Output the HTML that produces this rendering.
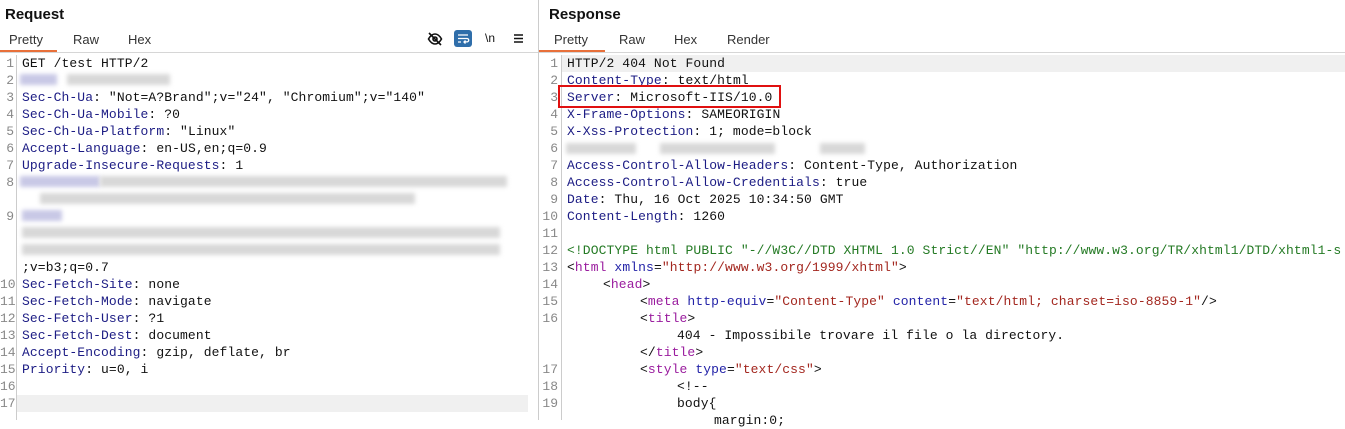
<!DOCTYPE html>
<html><head><meta charset="utf-8"><style>
*{margin:0;padding:0;box-sizing:border-box}
body{width:1345px;height:420px;background:#fff;position:relative;overflow:hidden;font-family:"Liberation Sans",sans-serif}
.title{position:absolute;top:6px;font-weight:bold;font-size:15px;color:#111}
.tab{position:absolute;top:32px;font-size:13px;color:#333}
.ul{position:absolute;top:50px;height:2px;background:#e8703a}
.hr{position:absolute;top:52px;height:1px;background:#d6d6d6}
.ln{position:absolute;font-family:"Liberation Mono",monospace;font-size:13px;color:#888;width:14px;text-align:right;line-height:17px}
.t{position:absolute;font-family:"Liberation Mono",monospace;font-size:13px;color:#111;line-height:17px;white-space:pre;letter-spacing:0.1px}
.h{color:#1c1c84}
.g{color:#247a24}.p{color:#9a1c9e}.a{color:#2323a8}.v{color:#a3271f}
.bl{position:absolute;background:#d8d8d8;filter:blur(2px);height:11px}
.bb{position:absolute;background:#c8c8e6;filter:blur(2px);height:11px}
.gut{position:absolute;top:55px;bottom:0;width:1px;background:#ccc}
.cur{position:absolute;height:17px;background:#f0f0f0}
.in{display:inline-block}
</style></head><body>
<div style="position:absolute;left:538px;top:0;width:1px;height:420px;background:#ccc"></div>
<div class="title" style="left:5px">Request</div>
<div class="title" style="left:549px">Response</div>
<div class="tab" style="left:9px">Pretty</div><div class="tab" style="left:73px">Raw</div><div class="tab" style="left:128px">Hex</div>
<div class="tab" style="left:554px">Pretty</div><div class="tab" style="left:619px">Raw</div><div class="tab" style="left:674px">Hex</div><div class="tab" style="left:727px">Render</div>
<div class="ul" style="left:0;width:57px"></div><div class="ul" style="left:539px;width:66px"></div>
<div class="hr" style="left:0;width:538px"></div><div class="hr" style="left:539px;width:806px"></div>
<svg style="position:absolute;left:427px;top:31px" width="16" height="16" viewBox="0 0 16 16" fill="none" stroke="#111" stroke-width="1.6"><path d="M1.5 8c2-3.5 4-5 6.5-5s4.5 1.5 6.5 5c-2 3.5-4 5-6.5 5S3.5 11.5 1.5 8z"/><circle cx="8" cy="8" r="2"/><path d="M2 2l12 12"/></svg>
<div style="position:absolute;left:454px;top:30px;width:18px;height:17px;background:#2f6eaa;border-radius:3px"></div>
<svg style="position:absolute;left:456px;top:32px" width="14" height="13" viewBox="0 0 14 13" fill="none" stroke="#fff" stroke-width="1.3"><path d="M2 3h10M2 6.5h9a1.7 1.7 0 010 3.4H8M9.5 8.5L8 10l1.5 1.5M2 10h3"/></svg>
<div style="position:absolute;left:485px;top:31px;font-size:12px;color:#111">\n</div>
<svg style="position:absolute;left:513px;top:33px" width="11" height="11" viewBox="0 0 11 11" stroke="#111" stroke-width="1.5"><path d="M1 2h9M1 5.5h9M1 9h9"/></svg>

<div class="gut" style="left:16px"></div>
<div class="gut" style="left:561px"></div>
<div class="cur" style="left:17px;top:395px;width:511px"></div>
<div class="cur" style="left:562px;top:55px;width:783px"></div>

<!-- request -->
<div class="ln" style="left:0;top:55px">1<br>2<br>3<br>4<br>5<br>6<br>7<br>8<br><br>9<br><br><br><br>10<br>11<br>12<br>13<br>14<br>15<br>16<br>17</div>
<div class="t" style="left:22px;top:55px">GET /test HTTP/2

<span class="h">Sec-Ch-Ua</span>: "Not=A?Brand";v="24", "Chromium";v="140"
<span class="h">Sec-Ch-Ua-Mobile</span>: ?0
<span class="h">Sec-Ch-Ua-Platform</span>: "Linux"
<span class="h">Accept-Language</span>: en-US,en;q=0.9
<span class="h">Upgrade-Insecure-Requests</span>: 1





;v=b3;q=0.7
<span class="h">Sec-Fetch-Site</span>: none
<span class="h">Sec-Fetch-Mode</span>: navigate
<span class="h">Sec-Fetch-User</span>: ?1
<span class="h">Sec-Fetch-Dest</span>: document
<span class="h">Accept-Encoding</span>: gzip, deflate, br
<span class="h">Priority</span>: u=0, i</div>
<div class="bb" style="left:20px;top:74px;width:37px"></div><div class="bl" style="left:67px;top:74px;width:103px"></div>
<div class="bb" style="left:20px;top:176px;width:80px"></div><div class="bl" style="left:100px;top:176px;width:407px"></div>
<div class="bl" style="left:40px;top:193px;width:375px"></div>
<div class="bb" style="left:22px;top:210px;width:40px"></div>
<div class="bl" style="left:22px;top:227px;width:478px"></div>
<div class="bl" style="left:22px;top:244px;width:478px"></div>

<!-- response -->
<div class="ln" style="left:542px;top:55px;width:16px">1<br>2<br>3<br>4<br>5<br>6<br>7<br>8<br>9<br>10<br>11<br>12<br>13<br>14<br>15<br>16<br><br><br>17<br>18<br>19</div>
<div class="t" style="left:567px;top:55px">HTTP/2 404 Not Found
<span class="h">Content-Type</span>: text/html
<span class="h">Server</span>: Microsoft-IIS/10.0
<span class="h">X-Frame-Options</span>: SAMEORIGIN
<span class="h">X-Xss-Protection</span>: 1; mode=block

<span class="h">Access-Control-Allow-Headers</span>: Content-Type, Authorization
<span class="h">Access-Control-Allow-Credentials</span>: true
<span class="h">Date</span>: Thu, 16 Oct 2025 10:34:50 GMT
<span class="h">Content-Length</span>: 1260

<span class="g">&lt;!DOCTYPE html PUBLIC "-//W3C//DTD XHTML 1.0 Strict//EN" "http://www.w3.org/TR/xhtml1/DTD/xhtml1-s</span>
&lt;<span class="p">html</span> <span class="a">xmlns</span>=<span class="v">"http://www.w3.org/1999/xhtml"</span>&gt;
<span class="in" style="width:36px"></span>&lt;<span class="p">head</span>&gt;
<span class="in" style="width:73px"></span>&lt;<span class="p">meta</span> <span class="a">http-equiv</span>=<span class="v">"Content-Type"</span> <span class="a">content</span>=<span class="v">"text/html; charset=iso-8859-1"</span>/&gt;
<span class="in" style="width:73px"></span>&lt;<span class="p">title</span>&gt;
<span class="in" style="width:110px"></span>404 - Impossibile trovare il file o la directory.
<span class="in" style="width:73px"></span>&lt;/<span class="p">title</span>&gt;
<span class="in" style="width:73px"></span>&lt;<span class="p">style</span> <span class="a">type</span>=<span class="v">"text/css"</span>&gt;
<span class="in" style="width:110px"></span>&lt;!--
<span class="in" style="width:110px"></span>body{
<span class="in" style="width:147px"></span>margin:0;</div>
<div class="bl" style="left:566px;top:143px;width:70px"></div><div class="bl" style="left:660px;top:143px;width:115px"></div><div class="bl" style="left:820px;top:143px;width:45px"></div>
<div style="position:absolute;left:558px;top:85px;width:223px;height:23px;border:2.5px solid #e01010"></div>
</body></html>
